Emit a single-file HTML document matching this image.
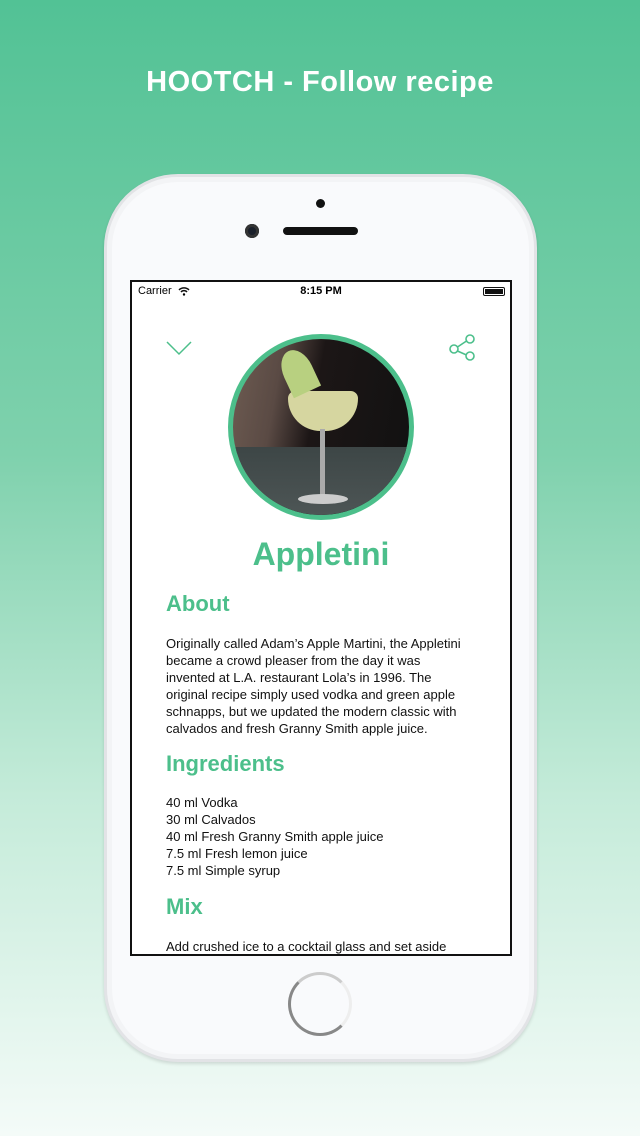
<!DOCTYPE html>
<html><head><meta charset="utf-8"><style>
*{margin:0;padding:0;box-sizing:border-box}
body{width:640px;height:1136px;overflow:hidden;position:relative;font-family:"Liberation Sans",sans-serif;background:linear-gradient(#52c295 0%,#7fd1ad 40%,#c4ebd9 70%,#f4fbf8 100%)}
.title{position:absolute;top:66px;left:0;width:640px;text-align:center;color:#fff;font-size:29px;font-weight:bold;letter-spacing:0.5px}
.phone{position:absolute;left:104px;top:174px;width:433px;height:888px;border-radius:74px;background:#f9fafc;border:3px solid #e2e3e6;box-shadow:inset 0 0 0 5px #f3f4f6,0 2px 3px rgba(0,0,0,.12)}
.screen{position:absolute;left:130px;top:280px;width:382px;height:676px;border:2px solid #111;background:#fff;overflow:hidden}
.g{color:#4cbf8b;font-weight:bold;position:absolute}
.t{position:absolute;left:34px;font-size:13px;line-height:17px;color:#111;white-space:nowrap}
</style></head><body>
<div class="title">HOOTCH - Follow recipe</div>
<div class="phone"></div>
<div style="position:absolute;left:316px;top:199px;width:9px;height:9px;border-radius:50%;background:#111"></div>
<div style="position:absolute;left:245px;top:224px;width:14px;height:14px;border-radius:50%;background:#1a1f2a;box-shadow:inset 0 0 0 3px #333"></div>
<div style="position:absolute;left:283px;top:227px;width:75px;height:8px;border-radius:4px;background:#111"></div>
<div style="position:absolute;left:288px;top:972px;width:64px;height:64px;border-radius:50%;border:3px solid #888;border-top-color:#ccc;border-right-color:#eee"></div>
<div class="screen">
<div style="position:absolute;left:6px;top:3px;font-size:11px">Carrier</div>
<svg style="position:absolute;left:46px;top:5px" width="12" height="9" viewBox="0 0 12 9"><path d="M1 3a7 7 0 0 1 10 0M3 5a4 4 0 0 1 6 0" stroke="#111" stroke-width="1.5" fill="none"/><circle cx="6" cy="7.5" r="1.2"/></svg>
<div style="position:absolute;left:0;width:378px;top:3px;text-align:center;font-size:11px;font-weight:bold">8:15 PM</div>
<div style="position:absolute;left:351px;top:5px;width:22px;height:9px;border:1px solid #111;border-radius:2px;padding:1px"><div style="background:#111;width:100%;height:100%"></div></div>
<svg style="position:absolute;left:34px;top:58px" width="28" height="18"><path d="M1 2l12 12 12-12" stroke="#4cbf8b" stroke-width="1.5" fill="none"/></svg>
<svg style="position:absolute;left:316px;top:50px" width="32" height="32"><g stroke="#4cbf8b" stroke-width="1.6" fill="none"><circle cx="6" cy="17" r="4"/><circle cx="22" cy="7" r="4"/><circle cx="22" cy="24" r="4"/><path d="M9.5 15l9-6M9.5 19l9 4"/></g></svg>
<div style="position:absolute;left:96px;top:52px;width:186px;height:186px;border-radius:50%;border:5px solid #4cbf8b;overflow:hidden;background:linear-gradient(100deg,#6e5c52 0%,#5a4a44 25%,#1c1616 45%,#111 100%)">
<div style="position:absolute;left:0;top:108px;width:186px;height:80px;background:linear-gradient(#3d4646,#505858)"></div>
<div style="position:absolute;left:55px;top:52px;width:70px;height:40px;border-radius:8px 8px 35px 35px;background:#d6d6a0"></div>
<div style="position:absolute;left:87px;top:90px;width:5px;height:68px;background:#aaa"></div>
<div style="position:absolute;left:65px;top:155px;width:50px;height:10px;border-radius:50%;background:#ccc"></div>
<div style="position:absolute;left:50px;top:10px;width:30px;height:45px;background:#b8d080;transform:rotate(-25deg);border-radius:50% 50% 0 0"></div>
</div>
<div class="g" style="left:0;width:378px;text-align:center;top:254px;font-size:32px">Appletini</div>
<div class="g" style="left:34px;top:309px;font-size:22px">About</div>
<div class="t" style="top:353px">Originally called Adam’s Apple Martini, the Appletini<br>became a crowd pleaser from the day it was<br>invented at L.A. restaurant Lola’s in 1996. The<br>original recipe simply used vodka and green apple<br>schnapps, but we updated the modern classic with<br>calvados and fresh Granny Smith apple juice.</div>
<div class="g" style="left:34px;top:469px;font-size:22px">Ingredients</div>
<div class="t" style="top:512px">40 ml Vodka<br>30 ml Calvados<br>40 ml Fresh Granny Smith apple juice<br>7.5 ml Fresh lemon juice<br>7.5 ml Simple syrup</div>
<div class="g" style="left:34px;top:612px;font-size:22px">Mix</div>
<div class="t" style="top:656px">Add crushed ice to a cocktail glass and set aside</div>
</div>
</body></html>
